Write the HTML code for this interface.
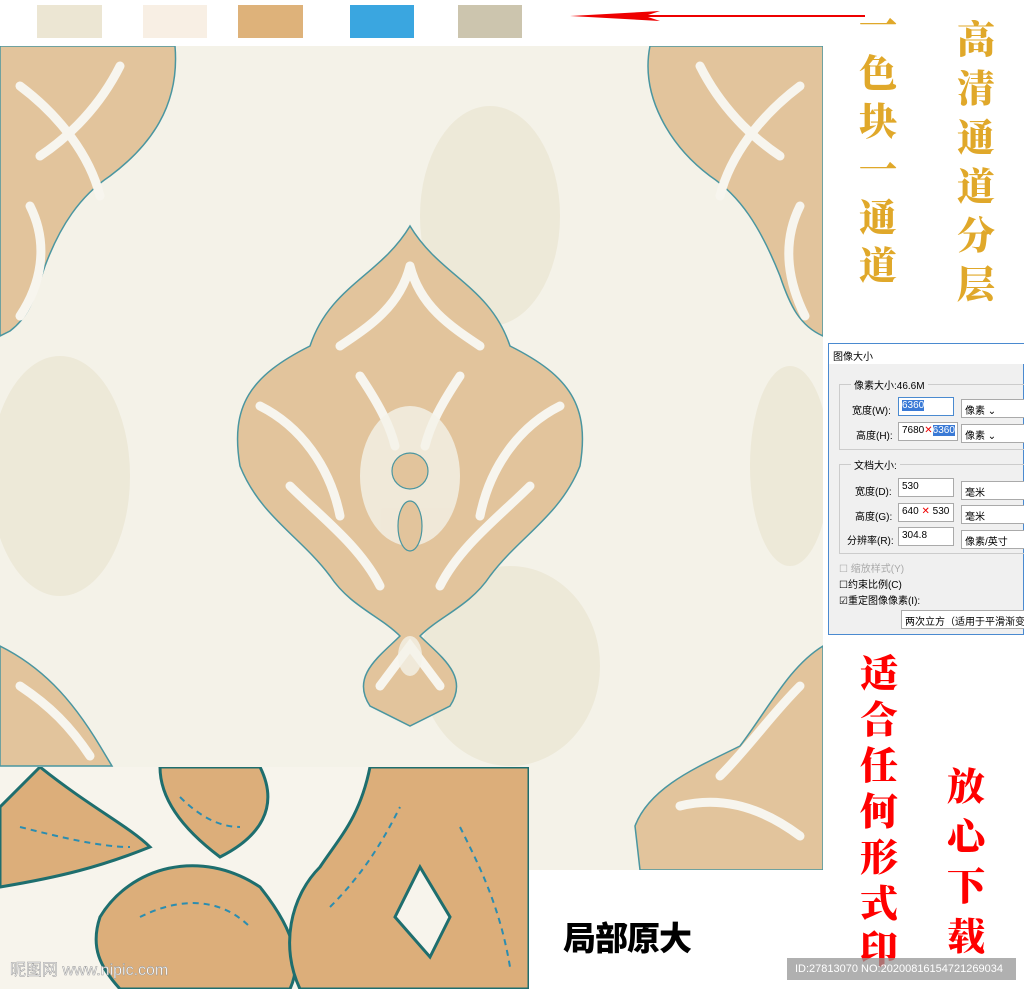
<!DOCTYPE html>
<html><head><meta charset="utf-8"><style>
*{margin:0;padding:0;box-sizing:border-box}
body{width:1024px;height:989px;background:#fff;position:relative;overflow:hidden;font-family:"Liberation Sans","Noto Sans CJK SC",sans-serif}
.a{position:absolute}
.sw{position:absolute;top:5px;height:33px}
.col{position:absolute;font-family:"Noto Serif CJK SC","Noto Sans CJK SC",serif;font-weight:900;text-align:center;line-height:1}
.col span{display:block}
.dlg{left:828px;top:343px;width:196px;height:292px;background:#f0f0f0;border:1px solid #4a8ad0;font-size:10px;color:#000}
.dlg .t{position:absolute;white-space:nowrap}
.in{position:absolute;background:#fff;border:1px solid #aaa;height:19px;font-size:10px;padding:2px 3px;white-space:nowrap}
.grp{position:absolute;border:1px solid #ccc}
</style></head><body>
<div class="sw" style="left:37px;width:65px;background:#ece6d3"></div>
<div class="sw" style="left:143px;width:64px;background:#f8efe4"></div>
<div class="sw" style="left:238px;width:65px;background:#deb27a"></div>
<div class="sw" style="left:350px;width:64px;background:#3aa6e0"></div>
<div class="sw" style="left:458px;width:64px;background:#ccc5ae"></div>
<svg class="a" style="left:565px;top:5px" width="300" height="22"><path d="M5 11 L95 6 L80 11 L95 16 Z" fill="#e00"/><rect x="80" y="10" width="220" height="2" fill="#e00"/></svg>

<svg class="a" style="left:0;top:46px" width="823" height="824" viewBox="0 0 823 824">
<rect width="823" height="824" fill="#f4f2e8"/>
<g fill="#ebe6d3" opacity=".8">
<ellipse cx="490" cy="170" rx="70" ry="110"/><ellipse cx="60" cy="430" rx="70" ry="120"/><ellipse cx="510" cy="620" rx="90" ry="100"/><ellipse cx="790" cy="420" rx="40" ry="100"/>
</g>
<g fill="#e2c49c" stroke="#4a96a0" stroke-width="1.5">
<path d="M410 180 C380 230 330 240 310 300 C250 330 230 360 240 420 C260 470 300 490 330 530 C350 560 380 570 400 590 C380 610 350 630 370 660 L410 680 L450 660 C470 630 440 610 420 590 C440 570 470 560 490 530 C520 490 560 470 580 420 C590 360 570 330 510 300 C490 240 440 230 410 180 Z"/>
<path d="M0 0 L175 0 C180 60 150 100 110 130 C80 150 60 180 45 220 C35 250 30 270 10 285 L0 290 Z"/>
<path d="M823 0 L650 0 C640 50 670 100 710 130 C740 150 760 180 780 230 C790 260 800 280 823 290 Z"/>
<path d="M0 600 C40 620 70 650 100 700 L112 720 L0 720 Z"/>
<path d="M823 600 C790 620 770 660 740 700 C700 720 650 740 635 780 L640 824 L823 824 Z"/>
</g>
<g fill="none" stroke="#f7f5ee" stroke-width="9" stroke-linecap="round">
<path d="M410 220 C400 260 370 280 340 300 M410 220 C420 260 450 280 480 300 M260 360 C300 380 330 420 340 470 M560 360 C520 380 490 420 480 470 M290 440 C320 470 360 500 380 540 M530 440 C500 470 460 500 440 540 M360 330 C380 360 390 380 395 400 M460 330 C440 360 430 380 425 400 M380 640 L410 600 L440 640"/>
<path d="M20 40 C60 70 90 110 100 150 M120 20 C100 60 70 90 40 110 M30 160 C50 200 40 240 20 270 M800 40 C760 70 730 110 720 150 M700 20 C720 60 750 90 780 110 M800 160 C780 200 790 240 805 270 M20 640 C50 660 70 680 90 710 M800 640 C770 670 750 700 720 730 M680 760 C720 750 760 760 800 790"/>
</g>
<g fill="#f4f2e8" opacity=".8"><ellipse cx="410" cy="430" rx="50" ry="70"/><ellipse cx="410" cy="610" rx="12" ry="20"/></g>
<g fill="#e2c49c" stroke="#4a96a0" stroke-width="1.2"><circle cx="410" cy="425" r="18"/><ellipse cx="410" cy="480" rx="12" ry="25"/></g>
</svg>

<svg class="a" style="left:0;top:767px" width="529" height="222" viewBox="0 0 529 222">
<rect width="529" height="222" fill="#f7f4ec"/>
<g fill="#dcae7a" stroke="#1e6e6e" stroke-width="3">
<path d="M40 0 C90 40 130 60 150 80 C100 100 60 110 0 120 L0 40 Z"/>
<path d="M160 0 L260 0 C280 40 260 70 220 90 C180 60 160 30 160 0 Z"/>
<path d="M100 150 C130 100 200 80 260 120 C300 170 300 200 290 222 L120 222 C100 200 90 180 100 150 Z"/>
<path d="M370 0 L529 0 L529 222 L300 222 C280 180 290 130 320 100 C340 70 360 50 370 0 Z"/>
</g>
<g fill="none" stroke="#2b8db0" stroke-width="2" stroke-dasharray="6 5">
<path d="M20 60 C60 70 100 80 130 80 M140 150 C180 130 220 130 250 160 M330 140 C360 110 380 80 400 40 M460 60 C480 100 500 140 510 200 M180 30 C200 50 220 60 240 60"/>
</g>
<path d="M395 150 L420 100 L450 150 L430 190 Z" fill="#f7f4ec" stroke="#1e6e6e" stroke-width="3"/>
<text x="10" y="208" font-size="16" fill="#fff" stroke="#999" stroke-width=".5" font-family="Liberation Sans,Noto Sans CJK SC,sans-serif">昵图网 www.nipic.com</text>
</svg>

<div class="a" style="left:563px;top:912px;font-size:33px;font-weight:900;color:#000;letter-spacing:-1px;font-family:'Noto Sans CJK SC',sans-serif">局部原大</div>

<div class="col" style="left:857px;top:4px;width:42px;font-size:38px;color:#e0a82a"><span style="height:48px">一</span><span style="height:48px">色</span><span style="height:48px">块</span><span style="height:48px">一</span><span style="height:48px">通</span><span>道</span></div>
<div class="col" style="left:955px;top:18px;width:42px;font-size:38px;color:#e0a82a"><span style="height:49px">高</span><span style="height:49px">清</span><span style="height:49px">通</span><span style="height:49px">道</span><span style="height:49px">分</span><span>层</span></div>
<div class="col" style="left:858px;top:652px;width:42px;font-size:38px;color:#f00"><span style="height:46px">适</span><span style="height:46px">合</span><span style="height:46px">任</span><span style="height:46px">何</span><span style="height:46px">形</span><span style="height:46px">式</span><span>印</span></div>
<div class="col" style="left:945px;top:765px;width:42px;font-size:38px;color:#f00"><span style="height:50px">放</span><span style="height:50px">心</span><span style="height:50px">下</span><span>载</span></div>

<div class="a" style="left:787px;top:958px;width:229px;height:22px;background:rgba(150,150,150,.75);color:#fff;font-size:11px;line-height:22px;padding-left:8px;white-space:nowrap">ID:27813070 NO:20200816154721269034</div>

<div class="a dlg">
<div class="a" style="left:0;top:0;width:196px;height:20px;background:#fff"></div>
<div class="t" style="left:4px;top:4px">图像大小</div>
<div class="grp" style="left:10px;top:40px;width:190px;height:66px"></div>
<div class="t" style="left:22px;top:33px;background:#f0f0f0;padding:0 3px">像素大小:46.6M</div>
<div class="t" style="left:23px;top:58px">宽度(W):</div>
<div class="in" style="left:69px;top:53px;width:56px;border-color:#4a8ad0"><span style="background:#3a7ad6;color:#fff">6360</span></div>
<div class="in" style="left:132px;top:55px;width:66px">像素 ⌄</div>
<div class="t" style="left:27px;top:83px">高度(H):</div>
<div class="in" style="left:69px;top:78px;width:60px">7680<span style="color:#e00">✕</span><span style="background:#3a7ad6;color:#fff">6360</span></div>
<div class="in" style="left:132px;top:80px;width:66px">像素 ⌄</div>
<div class="grp" style="left:10px;top:120px;width:190px;height:90px"></div>
<div class="t" style="left:22px;top:113px;background:#f0f0f0;padding:0 3px">文档大小:</div>
<div class="t" style="left:26px;top:139px">宽度(D):</div>
<div class="in" style="left:69px;top:134px;width:56px">530</div>
<div class="in" style="left:132px;top:137px;width:66px">毫米</div>
<div class="t" style="left:26px;top:164px">高度(G):</div>
<div class="in" style="left:69px;top:159px;width:56px">640 <span style="color:#e00">✕</span> 530</div>
<div class="in" style="left:132px;top:161px;width:66px">毫米</div>
<div class="t" style="left:18px;top:188px">分辨率(R):</div>
<div class="in" style="left:69px;top:183px;width:56px">304.8</div>
<div class="in" style="left:132px;top:186px;width:66px">像素/英寸</div>
<div class="t" style="left:10px;top:216px;color:#aaa">☐ 缩放样式(Y)</div>
<div class="t" style="left:10px;top:232px">☐约束比例(C)</div>
<div class="t" style="left:10px;top:248px">☑重定图像像素(I):</div>
<div class="in" style="left:72px;top:266px;width:124px">两次立方（适用于平滑渐变</div>
</div>
</body></html>
